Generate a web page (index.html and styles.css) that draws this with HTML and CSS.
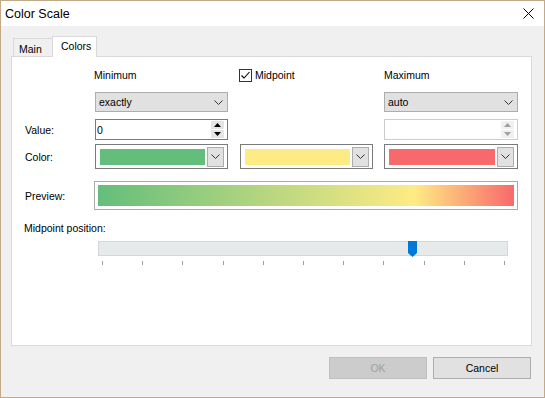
FILE: index.html
```html
<!DOCTYPE html>
<html>
<head>
<meta charset="utf-8">
<link rel="stylesheet" href="styles.css">
</head>
<body>
<div class="window">
  <div class="titlebar">
    <span class="title">Color Scale</span>
    <svg class="close" width="11" height="11" viewBox="0 0 11 11"><path d="M0.5 0.5 L10.5 10.5 M10.5 0.5 L0.5 10.5" stroke="#000" stroke-width="1" fill="none"/></svg>
  </div>
  <div class="body">
    <div class="tabs">
      <div class="tab">Main</div>
      <div class="tab active">Colors</div>
    </div>
    <div class="pane">
      <div class="row r1">
        <div></div>
        <div class="head c2">Minimum</div>
        <label class="check c3">
          <span class="box"><svg width="11" height="11" viewBox="0 0 11 11"><path d="M1.5 5.5 L4 8 L9.5 2" stroke="#000" stroke-width="1.1" fill="none"/></svg></span>
          <span>Midpoint</span>
        </label>
        <div class="head c4">Maximum</div>
      </div>
      <div class="row r2">
        <div></div>
        <div class="combo">
          <span>exactly</span>
          <svg width="9" height="5" viewBox="0 0 9 5"><polyline points="0.5,0.5 4.5,4.5 8.5,0.5" stroke="#333" fill="none"/></svg>
        </div>
        <div></div>
        <div class="combo c4">
          <span>auto</span>
          <svg width="9" height="5" viewBox="0 0 9 5"><polyline points="0.5,0.5 4.5,4.5 8.5,0.5" stroke="#333" fill="none"/></svg>
        </div>
      </div>
      <div class="row r3">
        <div class="lbl">Value:</div>
        <div class="spin">
          <span class="val">0</span>
          <span class="spinbtns">
            <span class="sb"><svg width="7" height="4" viewBox="0 0 7 4"><polygon points="0,4 3.5,0 7,4" fill="#000"/></svg></span>
            <span class="sb"><svg width="7" height="4" viewBox="0 0 7 4"><polygon points="0,0 3.5,4 7,0" fill="#000"/></svg></span>
          </span>
        </div>
        <div></div>
        <div class="spin disabled c4">
          <span class="val"></span>
          <span class="spinbtns">
            <span class="sb"><svg width="7" height="4" viewBox="0 0 7 4"><polygon points="0,4 3.5,0 7,4" fill="#a0a0a0"/></svg></span>
            <span class="sb"><svg width="7" height="4" viewBox="0 0 7 4"><polygon points="0,0 3.5,4 7,0" fill="#a0a0a0"/></svg></span>
          </span>
        </div>
      </div>
      <div class="row r4">
        <div class="lbl">Color:</div>
        <div class="ccombo">
          <span class="swatch green"></span>
          <span class="ddbtn"><svg width="9" height="5" viewBox="0 0 9 5"><polyline points="0.5,0.5 4.5,4.5 8.5,0.5" stroke="#333" fill="none"/></svg></span>
        </div>
        <div class="ccombo">
          <span class="swatch yellow"></span>
          <span class="ddbtn"><svg width="9" height="5" viewBox="0 0 9 5"><polyline points="0.5,0.5 4.5,4.5 8.5,0.5" stroke="#333" fill="none"/></svg></span>
        </div>
        <div class="ccombo c4">
          <span class="swatch red"></span>
          <span class="ddbtn"><svg width="9" height="5" viewBox="0 0 9 5"><polyline points="0.5,0.5 4.5,4.5 8.5,0.5" stroke="#333" fill="none"/></svg></span>
        </div>
      </div>
      <div class="row r5">
        <div class="lbl">Preview:</div>
        <div class="preview"><div class="grad"></div></div>
      </div>
      <div class="row r6">
        <div class="lbl wide">Midpoint position:</div>
      </div>
      <div class="row r7">
        <div></div>
        <div class="slider">
          <div class="track">
            <svg class="thumb" width="9" height="16" viewBox="0 0 9 16"><path d="M0 0 H9 V12 L4.5 16 L0 12 Z" fill="#0078d7"/></svg>
          </div>
          <div class="ticks">
            <span></span><span></span><span></span><span></span><span></span><span></span><span></span><span></span><span></span><span></span><span></span>
          </div>
        </div>
      </div>
    </div>
    <div class="buttons">
      <div class="btn disabled">OK</div>
      <div class="btn">Cancel</div>
    </div>
  </div>
</div>
</body>
</html>
```
FILE: styles.css
```css
* { box-sizing: border-box; }
html, body { margin: 0; padding: 0; }
body {
  font-family: "Liberation Sans", Arial, sans-serif;
  font-size: 10.5px;
  color: #000;
  background: #f0f0f0;
}
.window {
  width: 545px;
  height: 398px;
  border: 1px solid #c4a987;
  background: #f0f0f0;
  display: flex;
  flex-direction: column;
}
.titlebar {
  height: 25px;
  background: #fff;
  display: flex;
  align-items: center;
  justify-content: space-between;
  padding-left: 4px;
  padding-right: 10px;
  font-size: 12.5px;
}
.body {
  flex: 1;
  padding: 10px 12px 0 10px;
  display: flex;
  flex-direction: column;
}
.tabs {
  display: flex;
  align-items: flex-end;
  height: 20px;
  padding-left: 2px;
  position: relative;
  z-index: 1;
}
.tab {
  height: 18px;
  width: 41px;
  border: 1px solid #d9d9d9;
  border-bottom: none;
  background: #f0f0f0;
  padding-left: 5px;
  display: flex;
  align-items: center;
  padding-top: 2px;
}
.tab.active {
  height: 21px;
  width: 45px;
  margin-left: -2px;
  margin-bottom: -1px;
  background: #fff;
  padding-left: 8px;
  padding-top: 0;
  padding-bottom: 2px;
}
.pane {
  height: 290px;
  border: 1px solid #d9d9d9;
  background: #fff;
  padding: 9px 0 0 12px;
}
.row {
  display: grid;
  grid-template-columns: 59px 133px 133px 133px;
  column-gap: 12px;
  align-items: center;
}
.c4 { margin-left: -1px; }
.r1 { height: 18px; }
.r2 { height: 20px; margin-top: 8px; }
.r3 { height: 21px; margin-top: 7px; }
.r4 { height: 25px; margin-top: 4px; }
.r5 { height: 29px; margin-top: 12px; }
.r6 { height: 16px; margin-top: 10px; }
.r7 { margin-top: 5px; align-items: start; }
.lbl { padding-left: 1px; white-space: nowrap; }
.wide { grid-column: 1 / 4; padding-left: 0; }
.head.c2 { margin-left: -1px; }
.head.c4 { margin-left: -1px; }
.check {
  display: flex;
  align-items: center;
  gap: 3px;
  margin-left: -1px;
}
.box {
  width: 13px;
  height: 13px;
  border: 1px solid #333;
  background: #fff;
  display: flex;
}
.combo {
  height: 20px;
  border: 1px solid #adadad;
  background: #e1e1e1;
  display: flex;
  align-items: center;
  justify-content: space-between;
  padding: 0 4px 0 3px;
}
.spin {
  height: 21px;
  border: 1px solid #7a7a7a;
  background: #fff;
  display: flex;
  align-items: center;
  justify-content: space-between;
  padding: 0 3px 0 1px;
}
.spin.disabled { border-color: #cccccc; }
.spinbtns {
  display: flex;
  flex-direction: column;
  gap: 1px;
  width: 13px;
  height: 17px;
}
.sb {
  flex: 1;
  background: #e5e5e5;
  display: flex;
  align-items: center;
  justify-content: center;
}
.spin.disabled .sb { background: #f0f0f0; }
.ccombo {
  height: 25px;
  border: 1px solid #7a7a7a;
  background: #fff;
  display: flex;
  align-items: center;
  padding: 0 3px 0 4px;
  gap: 2px;
}
.swatch { flex: 1; height: 16px; }
.green { background: #63be7b; }
.yellow { background: #ffeb84; }
.red { background: #f8696b; }
.ddbtn {
  width: 17px;
  height: 20px;
  border: 1px solid #adadad;
  background: #e1e1e1;
  display: flex;
  align-items: center;
  justify-content: center;
}
.preview {
  grid-column: 2 / 5;
  height: 29px;
  margin-left: -1px;
  border: 1px solid #a9a9a9;
  padding: 3px;
  background: #fff;
}
.grad {
  height: 100%;
  background: linear-gradient(to right, #63be7b 0%, #ffeb84 76%, #f8696b 100%);
}
.slider {
  grid-column: 2 / 5;
  margin-left: 3px;
  width: 410px;
}
.track {
  height: 15px;
  border: 1px solid #d6d6d6;
  background: #e7eaea;
  position: relative;
}
.thumb {
  position: absolute;
  left: 309px;
  top: -1px;
}
.ticks {
  margin-top: 5px;
  margin-left: 4px;
  width: 403px;
  height: 4px;
  display: flex;
  justify-content: space-between;
}
.ticks span { width: 1px; height: 4px; background: #a0a0a0; }
.buttons {
  display: flex;
  justify-content: flex-end;
  gap: 6px;
  margin-top: 11px;
  margin-right: 1px;
}
.btn {
  width: 98px;
  height: 22px;
  border: 1px solid #adadad;
  background: #e1e1e1;
  display: flex;
  align-items: center;
  justify-content: center;
}
.btn.disabled {
  background: #cccccc;
  border-color: #bfbfbf;
  color: #a0a0a0;
}
```
